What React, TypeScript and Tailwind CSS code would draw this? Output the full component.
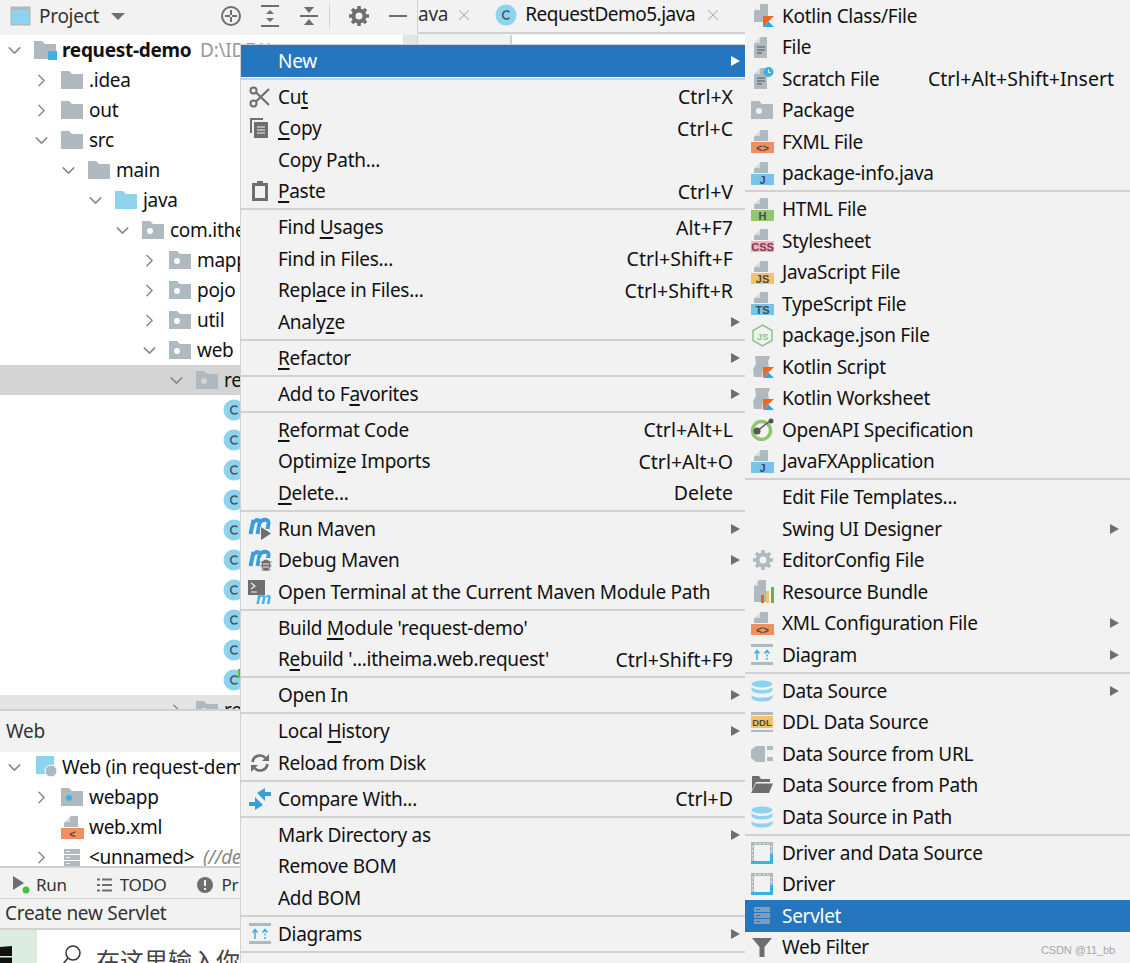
import { ChevronRight, ChevronDown, X } from "lucide-react";
import type { ReactNode } from "react";

const font = "font-['Noto_Sans','Open_Sans',sans-serif]";
const labelText = "text-[19px] tracking-[-0.28px]";

function Folder({ dot, color = "#afb9c0" }: { dot?: string; color?: string }) {
  return (
    <svg width="22" height="18" viewBox="0 0 22 18" className="shrink-0">
      <path d="M0 0h8l3 3h11v15H0z" fill={color} />
      {dot && <circle cx="8" cy="10" r="3" fill={dot} />}
    </svg>
  );
}

function ClassIcon({ green }: { green?: boolean }) {
  return (
    <svg width="22" height="22" viewBox="0 0 22 22" className="shrink-0">
      <circle cx="11" cy="11" r="10.5" fill="#8ed3ee" />
      <path d="M14.5 8.2a4 4 0 1 0 0 5.6" fill="none" stroke="#4a5358" strokeWidth="1.6" />
      {green && <rect x="15" y="0" width="3" height="9" fill="#62b543" />}
    </svg>
  );
}

function TreeRow({
  level,
  open,
  icon,
  children,
  selected,
}: {
  level: number;
  open?: boolean;
  icon?: ReactNode;
  children: ReactNode;
  selected?: boolean;
}) {
  return (
    <div className={`flex h-[30px] shrink-0 items-center whitespace-nowrap ${selected ? "bg-[#d4d4d4]" : ""}`}>
      <div className="shrink-0" style={{ width: level * 27 }} />
      <div className="mr-[6px] flex w-[28px] shrink-0 items-center justify-center text-[#7f8b91]">
        {open === true && <ChevronDown size={21} strokeWidth={1.7} />}
        {open === false && <ChevronRight size={21} strokeWidth={1.7} />}
      </div>
      {icon}
      <span className={`ml-[6px] text-[#111] ${labelText}`}>{children}</span>
    </div>
  );
}

function FileBase({ band, label, labelColor = "#4a4a4a" }: { band: string; label?: string; labelColor?: string }) {
  return (
    <svg width="23" height="23" viewBox="0 0 23 23" className="shrink-0">
      <path d="M10 0h7v11H3V7z" fill="#afb9c0" />
      <path d="M9 1v5H3.5z" fill="#d6dbde" />
      <rect x="0" y="12" width="23" height="11" fill={band} />
      {label && (
        <text x="11.5" y="21.5" textAnchor="middle" fontSize="11" fontWeight="700" fontFamily="Liberation Sans" fill={labelColor}>
          {label}
        </text>
      )}
    </svg>
  );
}

function Doc({ clock }: { clock?: boolean }) {
  return (
    <svg width="23" height="23" viewBox="0 0 23 23" className="shrink-0">
      <path d="M10 1h6v21H3V8z" fill="#afb9c0" />
      <path d="M9 1v6H3.500z" fill="#d6dbde" />
      <path d="M6 11h8M6 14h8M6 17h5" stroke="#555" strokeWidth="1.2" />
      {clock && <circle cx="17.5" cy="5" r="5" fill="#3db1e4" />}
      {clock && <path d="M17.5 2.5V5.5h2" stroke="#fff" fill="none" />}
    </svg>
  );
}

function Kotlin({ script }: { script?: boolean }) {
  return (
    <svg width="23" height="23" viewBox="0 0 23 23" className="shrink-0">
      {script ? (
        <path d="M4 1h15l-2 6 1 5-6 2-1 8H3l-1-8 3-5z" fill="#afb9c0" />
      ) : (
        <path d="M10 0h7v18H3V7zM9 1v5H3.5z" fill="#afb9c0" fillRule="evenodd" />
      )}
      <path d="M12 23V12h11l-6 6z" fill="#f26522" />
      <path d="M12 23l5.500-5.500L23 23z" fill="#29abe2" />
    </svg>
  );
}

function Cylinders() {
  return (
    <svg width="22" height="22" viewBox="0 0 22 22" className="shrink-0">
      <ellipse cx="11" cy="4" rx="10.5" ry="3.5" fill="#8ed3ee" />
      <path d="M.5 7c2 2 5 3 10.5 3s8.500-1 10.500-3v3.500c-2 2-5 3-10.500 3s-8.500-1-10.500-3z" fill="#8ed3ee" />
      <path d="M.5 15c2 2 5 2.500 10.500 2.500S19.500 17 21.500 15v3c-2 2.500-5 3.500-10.500 3.500S2.500 20.500.5 18z" fill="#8ed3ee" />
    </svg>
  );
}

function Driver() {
  return (
    <svg width="22" height="22" viewBox="0 0 22 22" className="shrink-0">
      <rect x="1.5" y="1.5" width="19" height="19" fill="none" stroke="#afb9c0" strokeWidth="3" />
      <path d="M0 20.500H22M20.500 12V22" stroke="#3db1e4" strokeWidth="3" />
      <path d="M1.500 4V18M20.500 4V11M4 1.500H18" stroke="#f2f2f2" strokeWidth="1" strokeDasharray="1.500 2.500" />
    </svg>
  );
}

function ServerIcon({ color = "#afb9c0", hole = "#f2f2f2" }: { color?: string; hole?: string }) {
  return (
    <svg width="16" height="17" viewBox="0 0 16 17" className="shrink-0">
      <rect width="16" height="5" fill={color} />
      <rect y="6" width="16" height="5" fill={color} />
      <rect y="12" width="16" height="5" fill={color} />
      <path d="M2 2.500h4M2 8.500h4M2 14.500h4" stroke={hole} />
    </svg>
  );
}

function DiagramIcon() {
  return (
    <svg width="22" height="21" viewBox="0 0 22 21" className="shrink-0">
      <rect width="22" height="3" fill="#afb9c0" />
      <rect y="18" width="22" height="3" fill="#afb9c0" />
      <path d="M6 16V7M3.500 9.500L6 6.500l2.500 3" fill="none" stroke="#3db1e4" strokeWidth="1.5" />
      <path d="M16 16V7" fill="none" stroke="#3db1e4" strokeWidth="1.5" strokeDasharray="2 1.500" />
      <path d="M13.500 9.500L16 6.500l2.500 3" fill="none" stroke="#3db1e4" strokeWidth="1.5" />
    </svg>
  );
}

function MavenM() {
  return (
    <path
      d="M2.500 17L5.500 3M4.500 7C7.500 1.500 12 2 11.500 6L9.500 17M11.500 6C14.500 1.500 21 1.500 20.500 6.500L19.500 12"
      fill="none"
      stroke="#3b9ed9"
      strokeWidth="4"
    />
  );
}

const grayIcon = "#6e6e6e";

const leftIcons: Record<string, ReactNode> = {
  cut: (
    <svg width="22" height="22" viewBox="0 0 22 22">
      <circle cx="4.5" cy="4.5" r="3" fill="none" stroke={grayIcon} strokeWidth="2" />
      <circle cx="4.5" cy="17.500" r="3" fill="none" stroke={grayIcon} strokeWidth="2" />
      <path d="M7 6.500L20 19M7 15.500L20 3" stroke={grayIcon} strokeWidth="2.2" />
    </svg>
  ),
  copy: (
    <svg width="20" height="20" viewBox="0 0 20 20">
      <path d="M0 0h13v2H2v13H0z" fill={grayIcon} />
      <path d="M4 4h14v16H4z" fill={grayIcon} />
      <path d="M7 9h8M7 12h8M7 15h8" stroke="#f2f2f2" strokeWidth="1.2" />
    </svg>
  ),
  paste: (
    <svg width="16" height="20" viewBox="0 0 16 20">
      <path d="M1.500 3.500h13v15h-13z" fill="none" stroke={grayIcon} strokeWidth="3" />
      <rect x="5" y="0" width="6" height="4" fill={grayIcon} />
    </svg>
  ),
  runMaven: (
    <svg width="24" height="23" viewBox="0 0 24 23">
      <MavenM />
      <path d="M12 10h2l9 6-9 7h-2z" fill="#f2f2f2" />
      <path d="M13 10l10 6.500L13 23z" fill={grayIcon} />
    </svg>
  ),
  debugMaven: (
    <svg width="24" height="23" viewBox="0 0 24 23">
      <MavenM />
      <path d="M12 9h12v14H12z" fill="#f2f2f2" />
      <ellipse cx="18" cy="16" rx="4.5" ry="5.5" fill={grayIcon} />
      <path d="M12.500 13h11M12.500 17h11M13.500 21h9" stroke={grayIcon} strokeWidth="1.2" />
      <path d="M15 15h6M15 18h6" stroke="#f2f2f2" />
    </svg>
  ),
  terminal: (
    <svg width="24" height="24" viewBox="0 0 24 24">
      <rect width="17" height="15" fill={grayIcon} />
      <path d="M3 3l4 3-4 3M3 12h6" fill="none" stroke="#f2f2f2" strokeWidth="1.2" />
      <text x="8" y="24" fontSize="17" fontStyle="italic" fontWeight="700" fontFamily="Liberation Sans" fill="#3db1e4">
        m
      </text>
    </svg>
  ),
  reload: (
    <svg width="20" height="20" viewBox="0 0 20 20">
      <path d="M2.500 9a7.500 7.500 0 0 1 13-4" fill="none" stroke={grayIcon} strokeWidth="2.6" />
      <path d="M17.500 11a7.500 7.500 0 0 1-13 4" fill="none" stroke={grayIcon} strokeWidth="2.6" />
      <path d="M12 8h7V1zM8 12H1v7z" fill={grayIcon} />
    </svg>
  ),
  compare: (
    <svg width="22" height="22" viewBox="0 0 22 22">
      <path d="M0 14h6V9l8 8-8 5v-4H0zM22 8h-6v5L8 5l8-5v4h6z" fill="#3b9ed9" />
    </svg>
  ),
  diagram: <DiagramIcon />,
};

type LeftItem = { label: ReactNode; key?: string; icon?: string; arrow?: boolean };

const U = ({ children }: { children: ReactNode }) => (
  <span className="underline decoration-[1.5px] underline-offset-[3px]">{children}</span>
);

const leftMenu: LeftItem[][] = [
  [
    { label: <>Cu<U>t</U></>, key: "Ctrl+X", icon: "cut" },
    { label: <><U>C</U>opy</>, key: "Ctrl+C", icon: "copy" },
    { label: "Copy Path..." },
    { label: <><U>P</U>aste</>, key: "Ctrl+V", icon: "paste" },
  ],
  [
    { label: <>Find <U>U</U>sages</>, key: "Alt+F7" },
    { label: "Find in Files...", key: "Ctrl+Shift+F" },
    { label: <>Repl<U>a</U>ce in Files...</>, key: "Ctrl+Shift+R" },
    { label: <>Analy<U>z</U>e</>, arrow: true },
  ],
  [{ label: <><U>R</U>efactor</>, arrow: true }],
  [{ label: <>Add to F<U>a</U>vorites</>, arrow: true }],
  [
    { label: <><U>R</U>eformat Code</>, key: "Ctrl+Alt+L" },
    { label: <>Optimi<U>z</U>e Imports</>, key: "Ctrl+Alt+O" },
    { label: <><U>D</U>elete...</>, key: "Delete" },
  ],
  [
    { label: "Run Maven", icon: "runMaven", arrow: true },
    { label: "Debug Maven", icon: "debugMaven", arrow: true },
    { label: "Open Terminal at the Current Maven Module Path", icon: "terminal" },
  ],
  [
    { label: <>Build <U>M</U>odule 'request-demo'</> },
    { label: <>R<U>e</U>build '...itheima.web.request'</>, key: "Ctrl+Shift+F9" },
  ],
  [{ label: "Open In", arrow: true }],
  [
    { label: <>Local <U>H</U>istory</>, arrow: true },
    { label: "Reload from Disk", icon: "reload" },
  ],
  [{ label: "Compare With...", key: "Ctrl+D", icon: "compare" }],
  [
    { label: "Mark Directory as", arrow: true },
    { label: "Remove BOM" },
    { label: "Add BOM" },
  ],
  [{ label: "Diagrams", icon: "diagram", arrow: true }],
];

type RightItem = { label: string; key?: string; icon?: ReactNode; arrow?: boolean; active?: boolean };

const rightMenu: RightItem[][] = [
  [
    { label: "Kotlin Class/File", icon: <Kotlin /> },
    { label: "File", icon: <Doc /> },
    { label: "Scratch File", key: "Ctrl+Alt+Shift+Insert", icon: <Doc clock /> },
    { label: "Package", icon: <Folder dot="#f2f2f2" /> },
    { label: "FXML File", icon: <FileBase band="#f0905f" label="<>" /> },
    { label: "package-info.java", icon: <FileBase band="#74c5e8" label="J" /> },
  ],
  [
    { label: "HTML File", icon: <FileBase band="#92c66f" label="H" /> },
    { label: "Stylesheet", icon: <FileBase band="#f4b0c0" label="CSS" labelColor="#7a3a4a" /> },
    { label: "JavaScript File", icon: <FileBase band="#f5c26b" label="JS" /> },
    { label: "TypeScript File", icon: <FileBase band="#74c5e8" label="TS" /> },
    {
      label: "package.json File",
      icon: (
        <svg width="23" height="23" viewBox="0 0 23 23" className="shrink-0">
          <path d="M11.500 1l9.500 5.500v10L11.500 22 2 16.500v-10z" fill="none" stroke="#8dc48a" strokeWidth="1.5" />
          <text x="11.5" y="15.5" textAnchor="middle" fontSize="9.5" fontWeight="700" fontFamily="Liberation Sans" fill="#8dc48a">
            JS
          </text>
        </svg>
      ),
    },
    { label: "Kotlin Script", icon: <Kotlin script /> },
    { label: "Kotlin Worksheet", icon: <Kotlin script /> },
    {
      label: "OpenAPI Specification",
      icon: (
        <svg width="23" height="23" viewBox="0 0 23 23" className="shrink-0">
          <circle cx="10.5" cy="12.5" r="9" fill="none" stroke="#8fc56f" strokeWidth="3.5" />
          <path d="M6 13l13-10" stroke="#555" strokeWidth="1.5" />
          <circle cx="6" cy="13" r="3.5" fill="#555" />
          <circle cx="20" cy="3" r="2.5" fill="#555" />
        </svg>
      ),
    },
    { label: "JavaFXApplication", icon: <FileBase band="#74c5e8" label="J" /> },
  ],
  [
    { label: "Edit File Templates..." },
    { label: "Swing UI Designer", arrow: true },
    {
      label: "EditorConfig File",
      icon: (
        <svg width="20" height="20" viewBox="0 0 20 20" className="ml-[2px] shrink-0">
          <circle cx="10" cy="10" r="5.5" fill="none" stroke="#afb9c0" strokeWidth="4" />
          <path d="M10 0v4M10 16v4M0 10h4M16 10h4M3 3l3 3M14 14l3 3M17 3l-3 3M6 14l-3 3" stroke="#afb9c0" strokeWidth="3.5" />
        </svg>
      ),
    },
    {
      label: "Resource Bundle",
      icon: (
        <svg width="23" height="23" viewBox="0 0 23 23" className="shrink-0">
          <path d="M8 0h7v22H3V6z" fill="#afb9c0" />
          <path d="M7 1v5H3z" fill="#d6dbde" />
          <rect x="10" y="15" width="3" height="8" fill="#e6622e" />
          <rect x="15" y="11" width="3" height="12" fill="#f5c26b" />
          <rect x="20" y="7" width="3" height="16" fill="#6fb04c" />
        </svg>
      ),
    },
    { label: "XML Configuration File", icon: <FileBase band="#f0905f" label="<>" />, arrow: true },
    { label: "Diagram", icon: <DiagramIcon />, arrow: true },
  ],
  [
    { label: "Data Source", icon: <Cylinders />, arrow: true },
    {
      label: "DDL Data Source",
      icon: (
        <svg width="22" height="20" viewBox="0 0 22 20" className="shrink-0">
          <rect width="22" height="3" fill="#afb9c0" />
          <rect y="4" width="22" height="12" fill="#f5c26b" />
          <rect y="18" width="22" height="2" fill="#afb9c0" />
          <text x="11" y="14" textAnchor="middle" fontSize="9.5" fontWeight="700" fontFamily="Liberation Sans" fill="#4a4a4a">
            DDL
          </text>
        </svg>
      ),
    },
    {
      label: "Data Source from URL",
      icon: (
        <svg width="22" height="20" viewBox="0 0 22 20" className="shrink-0">
          <path d="M5 2h9v16H5l-5-4V6z" fill="#afb9c0" />
          <rect x="16" y="2" width="6" height="4" fill="#afb9c0" />
          <rect x="16" y="13" width="6" height="4" fill="#afb9c0" />
        </svg>
      ),
    },
    {
      label: "Data Source from Path",
      icon: (
        <svg width="22" height="18" viewBox="0 0 22 18" className="shrink-0">
          <path d="M1 0h7l2 3h9v3H5L1 14z" fill="#6e6e6e" />
          <path d="M5 7.500h17L18 17H0z" fill="#6e6e6e" />
        </svg>
      ),
    },
    { label: "Data Source in Path", icon: <Cylinders /> },
  ],
  [
    { label: "Driver and Data Source", icon: <Driver /> },
    { label: "Driver", icon: <Driver /> },
    { label: "Servlet", icon: <span className="ml-[3px] flex"><ServerIcon color="#7f9dbb" hole="#2675bf" /></span>, active: true },
    {
      label: "Web Filter",
      icon: (
        <svg width="20" height="19" viewBox="0 0 20 19" className="ml-[1px] shrink-0">
          <path d="M0 0h20L12.500 9v10h-5V9z" fill="#6e6e6e" />
        </svg>
      ),
    },
  ],
];

function Arrow({ active, sub }: { active?: boolean; sub?: boolean }) {
  return (
    <span
      className={`absolute top-1/2 h-0 w-0 -translate-y-1/2 border-y-[5px] border-l-[9px] border-y-transparent ${sub ? "right-[11px]" : "right-[5px]"} ${
        active ? "border-l-white" : "border-l-[#6e6e6e]"
      }`}
    />
  );
}

function Separator() {
  return (
    <div className="flex h-[4.5px] items-center">
      <div className="h-[2px] w-full bg-[#d1d1d1]" />
    </div>
  );
}

function MenuRow({
  iconBox,
  sub,
  item,
}: {
  iconBox: ReactNode;
  sub?: boolean;
  item: { label: ReactNode; key?: string; arrow?: boolean; active?: boolean };
}) {
  return (
    <div className={`relative flex h-[31.5px] items-center whitespace-nowrap ${sub ? "pr-[16px]" : "pr-[12px]"} ${item.active ? "bg-[#2675bf] text-white" : "text-[#111]"}`}>
      <div className={`flex w-[37px] shrink-0 items-center ${sub ? "justify-start pl-[6px]" : "justify-center"}`}>{iconBox}</div>
      <span className={`flex-1 ${labelText}`}>{item.label}</span>
      {item.key && <span className="text-[19.5px]">{item.key}</span>}
      {item.arrow && <Arrow active={item.active} sub={sub} />}
    </div>
  );
}

export default function App() {
  return (
    <div className={`relative h-[963px] w-[1130px] overflow-hidden bg-white ${font}`}>
      <div className="flex h-full flex-col">
        {/* tool window header and the editor tabs behind the menus */}
        <div className="flex h-[35px] shrink-0 items-center bg-[#f2f2f2] pb-[3px]">
          <svg width="21" height="20" viewBox="0 0 21 20" className="ml-[10px] shrink-0">
            <rect x=".5" y=".5" width="20" height="19" fill="#afb9c0" />
            <rect x="2" y="4" width="17" height="14" fill="#8ed3ee" />
          </svg>
          <span className={`ml-[8px] text-[#333] ${labelText}`}>Project</span>
          <span className="ml-[12px] h-0 w-0 border-x-[7px] border-t-[7px] border-x-transparent border-t-[#6e6e6e]" />
          <svg width="22" height="22" viewBox="0 0 22 22" className="ml-[95px] shrink-0">
            <circle cx="11" cy="11" r="9" fill="none" stroke="#6e6e6e" strokeWidth="2" />
            <path d="M11 5v5M11 12v5M5 11h5M12 11h5" stroke="#6e6e6e" strokeWidth="2" />
          </svg>
          <svg width="20" height="22" viewBox="0 0 20 22" className="ml-[18px] shrink-0">
            <path d="M1 1h18M1 21h18" stroke="#6e6e6e" strokeWidth="2" />
            <path d="M10 5l4 4H6zM10 17l4-4H6z" fill="#6e6e6e" />
          </svg>
          <svg width="20" height="22" viewBox="0 0 20 22" className="ml-[19px] shrink-0">
            <path d="M1 11h18" stroke="#6e6e6e" strokeWidth="2" />
            <path d="M5 2h10l-5 6zM5 20h10l-5-6z" fill="#6e6e6e" />
          </svg>
          <div className="ml-[10px] h-[26px] w-px bg-[#d1d1d1]" />
          <svg width="20" height="20" viewBox="0 0 20 20" className="ml-[19px] shrink-0">
            <circle cx="10" cy="10" r="5.5" fill="none" stroke="#6e6e6e" strokeWidth="4" />
            <path d="M10 0v4M10 16v4M0 10h4M16 10h4M3 3l3 3M14 14l3 3M17 3l-3 3M6 14l-3 3" stroke="#6e6e6e" strokeWidth="3.5" />
          </svg>
          <div className="ml-[20px] h-[2.5px] w-[18px] bg-[#6e6e6e]" />
          <div className="ml-[10px] h-[35px] w-px shrink-0 bg-[#d1d1d1]" />
          <div className="flex h-[35px] flex-1 items-center border-b-2 border-[#d1d1d1] pb-[1px]">
            <span className={`text-[#333] ${labelText}`}>ava</span>
            <X size={18} strokeWidth={1.4} className="ml-[7px] shrink-0 text-[#aaa]" />
            <div className="ml-[22px] flex shrink-0 items-center">
              <ClassIcon />
            </div>
            <span className={`ml-[8px] tracking-[-0.5px] text-[19px] text-[#111]`}>RequestDemo5.java</span>
            <X size={18} strokeWidth={1.4} className="ml-[9px] shrink-0 text-[#aaa]" />
          </div>
        </div>

        <div className="flex min-h-0 flex-1">
          <div className="flex w-[403px] shrink-0 flex-col overflow-hidden">
            <TreeRow level={0} open icon={<span className="relative flex"><Folder /><span className="absolute -bottom-[1px] -right-[1px] h-[9px] w-[9px] bg-[#3db1e4]" /></span>}>
              <span className="font-bold">request-demo</span> <span className="ml-[4px] font-normal text-[#999]">D:\IDEA\</span>
            </TreeRow>
            <TreeRow level={1} open={false} icon={<Folder />}>.idea</TreeRow>
            <TreeRow level={1} open={false} icon={<Folder />}>out</TreeRow>
            <TreeRow level={1} open icon={<Folder />}>src</TreeRow>
            <TreeRow level={2} open icon={<Folder />}>main</TreeRow>
            <TreeRow level={3} open icon={<Folder color="#8ed3ee" />}>java</TreeRow>
            <TreeRow level={4} open icon={<Folder dot="#fff" />}>com.ithe</TreeRow>
            <TreeRow level={5} open={false} icon={<Folder dot="#fff" />}>mapp</TreeRow>
            <TreeRow level={5} open={false} icon={<Folder dot="#fff" />}>pojo</TreeRow>
            <TreeRow level={5} open={false} icon={<Folder dot="#fff" />}>util</TreeRow>
            <TreeRow level={5} open icon={<Folder dot="#fff" />}>web</TreeRow>
            <TreeRow level={6} open selected icon={<Folder dot="#d4d4d4" />}>re</TreeRow>
            {[0, 1, 2, 3, 4, 5, 6, 7, 8, 9].map((i) => (
              <div key={i} className="flex h-[30px] shrink-0 items-center pl-[223px]">
                <ClassIcon green={i === 9} />
              </div>
            ))}
            <div className="h-[14px] shrink-0 overflow-hidden bg-[#e4e4e4]">
              <TreeRow level={6} open={false} icon={<Folder dot="#e4e4e4" />}>re</TreeRow>
            </div>
            <div className="h-[2px] shrink-0 bg-[#d1d1d1]" />

            <div className="flex h-[41px] shrink-0 items-center bg-[#f2f2f2] pl-[6px] text-[#333]">
              <span className={labelText}>Web</span>
            </div>
            <div className="h-[114px] shrink-0 overflow-hidden">
              <TreeRow
                level={0}
                open
                icon={
                  <svg width="22" height="22" viewBox="0 0 22 22" className="-mr-[2px] ml-[2px] shrink-0">
                    <rect width="18" height="18" fill="#8ed3ee" />
                    <circle cx="15" cy="15" r="6" fill="#afb9c0" stroke="#fff" />
                  </svg>
                }
              >
                Web (in request-dem
              </TreeRow>
              <TreeRow level={1} open={false} icon={<Folder dot="#3db1e4" />}>webapp</TreeRow>
              <TreeRow level={1} icon={<span className="-mr-px flex"><FileBase band="#f0905f" label="<" /></span>}>web.xml</TreeRow>
              <TreeRow level={1} open={false} icon={<span className="ml-[3px] mr-[3px] flex"><ServerIcon /></span>}>
                &lt;unnamed&gt; <span className="ml-[4px] italic text-[#888]">(//de</span>
              </TreeRow>
            </div>
            <div className="flex h-[32px] shrink-0 items-center border-t-2 border-[#d1d1d1] bg-[#f2f2f2] pt-[3px] text-[17px] tracking-[-0.3px] text-[#333]">
              <svg width="18" height="18" viewBox="0 0 18 18" className="ml-[13px] shrink-0">
                <path d="M0 0l11 7L0 14z" fill="#6e6e6e" />
                <circle cx="13" cy="14" r="3.5" fill="#3ec43e" />
              </svg>
              <span className="ml-[5px]">Run</span>
              <svg width="15" height="14" viewBox="0 0 15 14" className="ml-[30px] shrink-0">
                <path d="M0 1.500h3M5 1.500h10M0 7h3M5 7h10M0 12.500h3M5 12.500h10" stroke="#6e6e6e" strokeWidth="2" />
              </svg>
              <span className="ml-[8px]">TODO</span>
              <svg width="16" height="16" viewBox="0 0 16 16" className="ml-[30px] shrink-0">
                <circle cx="8" cy="8" r="8" fill="#6e6e6e" />
                <path d="M8 3v6M8 11v2" stroke="#f2f2f2" strokeWidth="2" />
              </svg>
              <span className="ml-[9px]">Pr</span>
            </div>
            <div className={`flex h-[30px] shrink-0 items-center border-t border-[#d1d1d1] bg-[#f2f2f2] pl-[5px] text-[#333] ${labelText}`}>Create new Servlet</div>
            <div className="flex min-h-0 flex-1 items-stretch overflow-hidden border-t-2 border-[#d1d1d1] bg-[#dcecde]">
              <div className="flex w-[37px] shrink-0 items-start pt-[16px]">
                <svg width="12" height="17" viewBox="0 0 12 17" className="shrink-0">
                  <path d="M0 1l12-1v10H0zM0 11.500h12V17H0z" fill="#111" />
                </svg>
              </div>
              <div className="flex flex-1 items-start bg-white pl-[25px] pt-[15px] text-[#444]">
                <svg width="20" height="20" viewBox="0 0 20 20" className="shrink-0">
                  <circle cx="11" cy="8" r="7" fill="none" stroke="#333" strokeWidth="1.5" />
                  <path d="M6 13l-5 6" stroke="#333" strokeWidth="1.5" />
                </svg>
                <span className="ml-[14px] whitespace-nowrap font-['Noto_Sans_CJK_SC',sans-serif] text-[24px] leading-[30px]">在这里输入你</span>
              </div>
            </div>
          </div>

          {/* sliver of the editor above the context menu */}
          <div className="flex h-[9px] flex-1">
            <div className="w-[14px] bg-[#e4e4e4]" />
            <div className="w-px bg-[#d1d1d1]" />
            <div className="w-[94px] border-r-2 border-[#d1d1d1] bg-[#f2f2f2]" />
            <div className="flex-1 bg-white" />
          </div>
        </div>
      </div>

      {/* context menu */}
      <div className="absolute left-[240px] top-[44px] h-[919px] w-[505px] border-l border-t border-[#d1d1d1] bg-[#f2f2f2]">
        <MenuRow iconBox={null} item={{ label: "New", arrow: true, active: true }} />
        <Separator />
        {leftMenu.map((group, g) => (
          <div key={g}>
            {group.map((item, i) => (
              <MenuRow key={i} iconBox={item.icon ? leftIcons[item.icon] : null} item={item} />
            ))}
            <Separator />
          </div>
        ))}
      </div>

      {/* New submenu */}
      <div className="absolute left-[745px] top-0 h-[963px] w-[385px] bg-[#f2f2f2]">
        {rightMenu.map((group, g) => (
          <div key={g}>
            {group.map((item, i) => (
              <MenuRow key={i} sub iconBox={item.icon} item={item} />
            ))}
            {g < rightMenu.length - 1 && <Separator />}
          </div>
        ))}
        <span className="absolute bottom-[5px] right-[15px] font-['Liberation_Sans',sans-serif] text-[11px] tracking-[-0.1px] text-[#a8a8a8]">CSDN @11_bb</span>
      </div>
    </div>
  );
}
